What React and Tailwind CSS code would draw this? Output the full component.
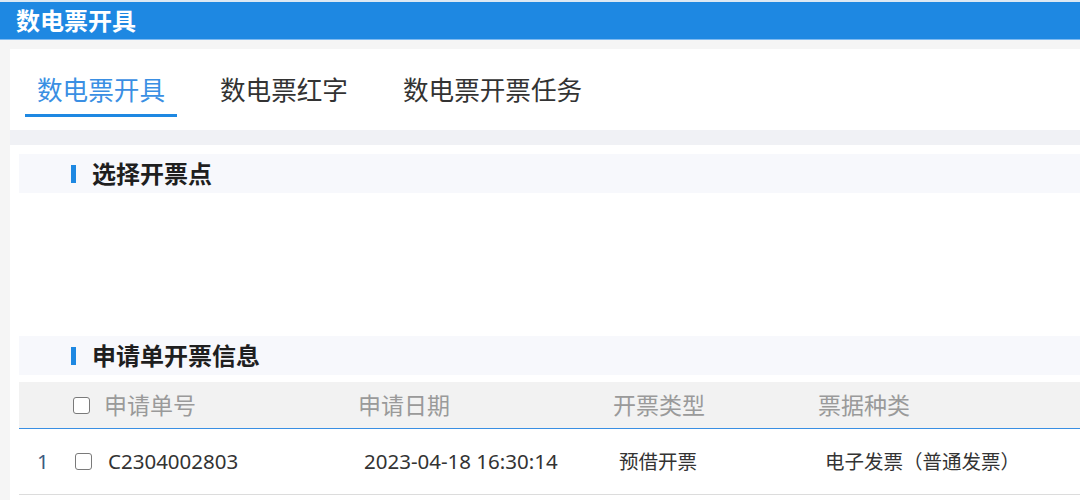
const font = {
  fontFamily: '"Noto Sans", "Noto Sans CJK SC", sans-serif',
}

function Box({ className = "" }) {
  return <span className={"block w-[17px] h-[17px] rounded-[3px] border-[1.5px] border-[#7a7a7a] bg-white shrink-0 " + className} />
}

function SectionHead({ title }) {
  return (
    <div className="h-[39px] bg-[#f7f8fc] flex items-center pl-[52px]">
      <span className="w-[5px] h-[18px] bg-[#1e88e2]" />
      <span className="ml-[16px] text-[24px] font-bold text-[#1f1f1f] leading-none">{title}</span>
    </div>
  )
}

export default function App() {
  const tabs = ["数电票开具", "数电票红字", "数电票开票任务"]

  return (
    <div className="w-[1080px] h-[500px] bg-white overflow-hidden flex flex-col" style={font}>
      <div className="h-[2px] bg-[#dce8f3]" />
      <div className="h-[38px] bg-[#1e88e2] flex items-center px-[16px] border-b border-[#7fbaf0]">
        <span className="text-white text-[24px] font-bold leading-none">数电票开具</span>
      </div>

      <div className="flex flex-1">
        <div className="w-[10px] bg-[#f5f5f5]" />
        <div className="flex-1 flex flex-col">
          <div className="h-[9px] bg-[#f5f5f5]" />

          <div className="h-[81px] bg-white flex gap-[31px] pl-[15px] pt-[25px]">
            {tabs.map((t, i) => (
              <div
                key={t}
                className={
                  "px-[12px] h-[43px] text-[25.6px] leading-[34px] border-b-[3px] " +
                  (i === 0 ? "text-[#3a8fe3] border-[#1e88e2]" : "text-[#333] border-transparent")
                }
              >
                {t}
              </div>
            ))}
          </div>

          <div className="h-[15px] bg-[#f0f1f5]" />

          <div className="flex-1 pl-[9px] pt-[9px]">
            <SectionHead title="选择开票点" />
            <div className="h-[143px]" />
            <SectionHead title="申请单开票信息" />

            <div className="mt-[7px]">
              <div className="grid grid-cols-[47px_286px_255px_205px_1fr] h-[47px] bg-[#f2f2f2] border-b border-[#3a8fe3] items-center text-[23px] text-[#9a9a9a]">
                <div />
                <div className="flex items-center pl-[7px] gap-[14px]">
                  <Box />
                  <span>申请单号</span>
                </div>
                <div className="pl-[6px]">申请日期</div>
                <div className="pl-[6px]">开票类型</div>
                <div className="pl-[6px]">票据种类</div>
              </div>

              <div className="grid grid-cols-[47px_286px_255px_205px_1fr] h-[66px] border-b border-[#dcdcdc] items-center text-[20.5px] text-[#333]">
                <div className="pl-[18px] text-[#3d5a80]">1</div>
                <div className="flex items-center pl-[9px] gap-[16px]">
                  <Box />
                  <span>C2304002803</span>
                </div>
                <div className="pl-[12px]">2023-04-18 16:30:14</div>
                <div className="pl-[12px] text-[19.5px]">预借开票</div>
                <div className="pl-[13px] text-[19.5px]">电子发票（普通发票）</div>
              </div>
            </div>
          </div>
        </div>
      </div>
    </div>
  )
}
